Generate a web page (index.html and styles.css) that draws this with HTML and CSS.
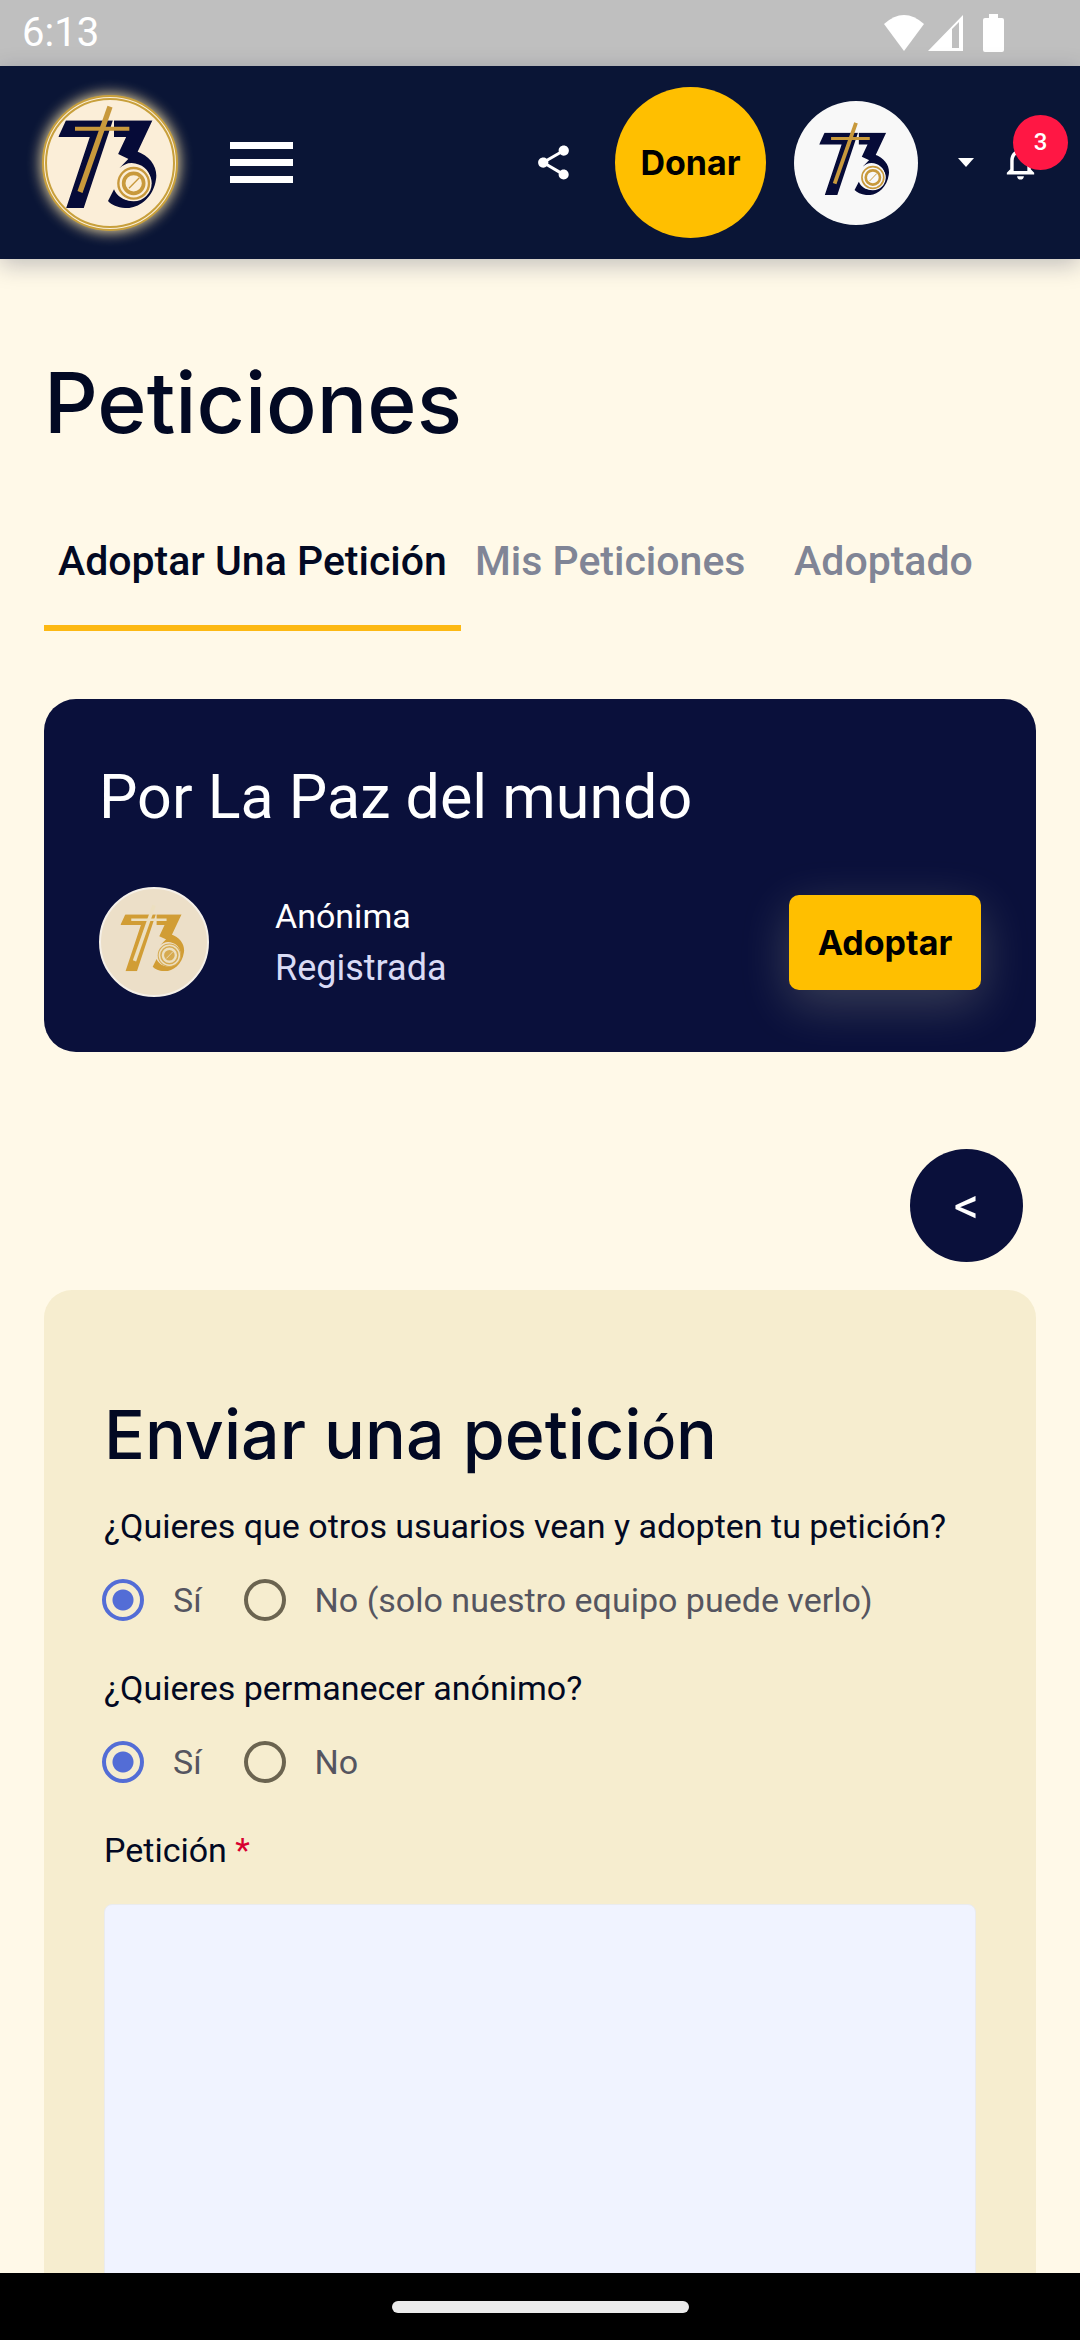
FILE: index.html
```html
<!DOCTYPE html>
<html lang="es">

<head>
    <meta charset="UTF-8">
    <meta name="viewport" content="width=device-width, initial-scale=1.0">
    <title>Peticiones</title>
    <link rel="stylesheet" href="styles.css">
</head>

<body>

    <!-- shared 73 emblem -->
    <svg class="sprite" aria-hidden="true">
        <clipPath id="emblemEdge">
            <path d="M108 178H400V441H85V228Z" />
        </clipPath>
        <symbol id="emblem" viewBox="0 66 480 480">
            <g class="emblem-main" clip-path="url(#emblemEdge)">
                <path class="emblem-stroke" d="M70 203H214L122 480" />
                <path class="emblem-stroke" d="M252 203H328L287 290" />
                <path d="M318 270C362 285 384 320 378 355C370 415 320 445 285 441C262 439 245 432 234 420L252 385C262 410 290 424 318 418C350 410 366 385 363 357C358 325 335 308 305 306C290 306 280 312 268 322Z" />
            </g>
            <g class="emblem-accent">
                <path stroke-width="16" d="M240 137L150 393" />
                <path stroke-width="12" d="M135 203H298" />
                <circle class="emblem-disc" cx="311" cy="367" r="54" />
                <circle stroke-width="7" cx="311" cy="367" r="46" />
                <circle stroke-width="11" cx="311" cy="367" r="30" />
                <path stroke-width="4" d="M297 382L328 350" />
            </g>
        </symbol>
    </svg>

    <div class="status-bar">
        <span>6:13</span>
        <div class="status-icons">
            <svg width="40" height="36" viewBox="0 0 40 36"><path d="M0 9Q20-9 40 9L20 36Z" /></svg>
            <svg width="35" height="36" viewBox="0 0 35 36"><path fill-rule="evenodd" d="M0 36L35 0V36ZM24 14V33H31V7Z" /></svg>
            <svg class="battery" width="21" height="38" viewBox="0 0 21 38"><path d="M6 0h9v4h4q2 0 2 2v30q0 2-2 2H2q-2 0-2-2V6q0-2 2-2h4z" /></svg>
        </div>
    </div>

    <header>
        <a class="logo" href="#" aria-label="Inicio">
            <svg class="emblem" width="160" height="160"><use href="#emblem" /></svg>
        </a>
        <button class="menu-button" aria-label="Menú">
            <span></span>
            <span></span>
            <span></span>
        </button>
        <div class="header-actions">
            <button class="icon-button" aria-label="Compartir">
                <svg width="41" height="41" viewBox="0 0 24 24"><path d="M18 16.1c-.8 0-1.4.3-2 .8l-7.100-4.200c.1-.2.1-.5.1-.7s0-.5-.1-.7L16 7.200c.5.500 1.200.8 2 .8 1.700 0 3-1.300 3-3s-1.300-3-3-3-3 1.300-3 3c0 .2 0 .5.1.7L8 9.800C7.500 9.300 6.800 9 6 9c-1.700 0-3 1.300-3 3s1.300 3 3 3c.8 0 1.500-.3 2-.8l7.100 4.200c-.1.200-.1.400-.1.600 0 1.600 1.300 2.900 3 2.900s2.900-1.300 2.900-2.900-1.300-2.900-2.900-2.900z" /></svg>
            </button>
            <button class="donate">Donar</button>
            <button class="profile" aria-label="Perfil">
                <svg class="emblem" width="114" height="114"><use href="#emblem" /></svg>
            </button>
            <button class="icon-button caret" aria-label="Abrir menú de perfil">
                <svg width="16" height="9" viewBox="0 0 16 9"><path d="M0 0h16L8 9z" /></svg>
            </button>
            <button class="icon-button bell" aria-label="Notificaciones">
                <svg width="41" height="41" viewBox="0 0 24 24"><path d="M12 22c1.100 0 2-.9 2-2h-4c0 1.100.9 2 2 2zm6-6v-5c0-3.100-1.600-5.600-4.500-6.300V4c0-.8-.7-1.500-1.500-1.500s-1.500.7-1.500 1.500v.7C7.600 5.400 6 7.900 6 11v5l-2 2v1h16v-1l-2-2zm-2 1H8v-6c0-2.500 1.500-4.500 4-4.500s4 2 4 4.500v6z" /></svg>
                <span class="badge">3</span>
            </button>
        </div>
    </header>

    <main>
        <h1>Peticiones</h1>

        <div class="tabs" role="tablist">
            <button class="tab active" role="tab" aria-selected="true">Adoptar Una Petición</button>
            <button class="tab" role="tab" aria-selected="false">Mis Peticiones</button>
            <button class="tab" role="tab" aria-selected="false">Adoptado</button>
        </div>

        <article class="petition">
            <h2>Por La Paz del mundo</h2>
            <div class="petition-row">
                <div class="avatar">
                    <svg class="emblem gold" width="104" height="104"><use href="#emblem" /></svg>
                </div>
                <div class="author">
                    <p>Anónima</p>
                    <p class="author-status">Registrada</p>
                </div>
                <button class="adopt">Adoptar</button>
            </div>
        </article>

        <div class="pager">
            <button class="prev" aria-label="Anterior">&lt;</button>
        </div>

        <form class="petition-form">
            <h2>Enviar una petici<span class="accented">ó</span>n</h2>

            <fieldset>
                <legend>¿Quieres que otros usuarios vean y adopten tu petición?</legend>
                <div class="options">
                    <input type="radio" name="visible" id="visibleYes" checked>
                    <label for="visibleYes">Sí</label>
                    <input type="radio" name="visible" id="visibleNo">
                    <label for="visibleNo">No (solo nuestro equipo puede verlo)</label>
                </div>
            </fieldset>

            <fieldset>
                <legend>¿Quieres permanecer anónimo?</legend>
                <div class="options">
                    <input type="radio" name="anonymous" id="anonymousYes" checked>
                    <label for="anonymousYes">Sí</label>
                    <input type="radio" name="anonymous" id="anonymousNo">
                    <label for="anonymousNo">No</label>
                </div>
            </fieldset>

            <label class="field-label" for="petition">Petición <span class="required">*</span></label>
            <textarea id="petition" rows="10"></textarea>
        </form>
    </main>

    <div class="nav-bar"><span></span></div>

</body>

</html>
```

FILE: styles.css
```css
* {
    margin: 0;
    padding: 0;
    box-sizing: border-box;
}

body {
    display: flex;
    flex-direction: column;
    height: 100vh;
    overflow: hidden;
    background-color: #fff9e8;
    color: #020923;
    font-family: Roboto, sans-serif;
    font-size: 34px;
    line-height: 52px;
}

button {
    border: none;
    background: none;
    font-family: inherit;
    cursor: pointer;
}

.sprite {
    position: absolute;
    width: 0;
    height: 0;
}

.emblem {
    --main: #060b38;
    --accent: #c8993c;
    --disc: #fbeed8;
    display: block;
    flex-shrink: 0;
}

.emblem-main {
    fill: var(--main);
}

.emblem-stroke {
    fill: none;
    stroke: var(--main);
    stroke-width: 50;
}

.emblem-accent {
    fill: none;
    stroke: var(--accent);
}

.emblem-disc {
    fill: var(--disc);
    stroke: none;
}

.emblem.gold {
    --main: #d19d35;
    --accent: #ecdfc0;
    --disc: #d6aa50;
}

/* status bar */

.status-bar {
    display: flex;
    flex-shrink: 0;
    justify-content: space-between;
    align-items: center;
    height: 66px;
    padding: 0 76px 0 22px;
    background-color: #bfbfbf;
    color: white;
    font-size: 40px;
}

.status-icons {
    display: flex;
    align-items: center;
    gap: 4px;
    fill: white;
}

.battery {
    margin-left: 16px;
}

/* header */

header {
    position: relative;
    display: flex;
    flex-shrink: 0;
    align-items: center;
    height: 193px;
    padding: 0 39px 0 42px;
    background-color: #0a1536;
    box-shadow: 0 6px 22px rgba(10, 21, 54, 0.25);
}

.logo {
    display: flex;
    align-items: center;
    justify-content: center;
    width: 136px;
    height: 136px;
    border: 5px double #c8a03c;
    border-radius: 50%;
    background-color: #fbeed8;
    box-shadow: 0 0 14px 1px #f5dfa5;
}

.menu-button {
    display: flex;
    flex-direction: column;
    gap: 10px;
    width: 63px;
    margin-left: 52px;
}

.menu-button span {
    height: 7px;
    background-color: white;
}

.header-actions {
    display: flex;
    align-items: center;
    margin-left: auto;
}

.icon-button {
    display: flex;
    fill: white;
}

.donate {
    width: 151px;
    height: 151px;
    margin: 0 28px 0 41px;
    border-radius: 50%;
    background-color: #ffbf00;
    color: black;
    font-family: Inter, sans-serif;
    font-size: 34px;
    font-weight: 700;
}

.profile {
    display: flex;
    align-items: center;
    justify-content: center;
    width: 124px;
    height: 124px;
    border-radius: 50%;
    background-color: #f8f8f8;
}

.profile .emblem {
    --disc: #f8f8f8;
}

.caret {
    margin: 0 26px 0 40px;
}

.bell {
    position: relative;
}

.badge {
    position: absolute;
    top: -27px;
    right: -27px;
    width: 55px;
    height: 55px;
    border-radius: 50%;
    background-color: #ff1744;
    color: white;
    font-size: 24px;
    font-weight: 500;
    line-height: 55px;
    text-align: center;
}

/* content */

main {
    flex: 1;
    min-height: 0;
    overflow: hidden;
    padding: 96px 44px 0;
}

h1 {
    font-family: Inter, sans-serif;
    font-size: 84px;
    font-weight: 500;
    line-height: 96px;
}

.tabs {
    display: flex;
    margin-top: 46px;
}

.tab {
    min-width: 248px;
    height: 134px;
    padding: 0 14px;
    border-bottom: 6px solid transparent;
    color: #808596;
    font-size: 41px;
    font-weight: 500;
}

.tab.active {
    border-color: #fdb913;
    color: #020923;
}

.petition {
    margin-top: 68px;
    padding: 60px 55px 55px;
    border-radius: 32px;
    background-color: #0a103b;
    color: white;
}

.petition h2 {
    font-size: 61px;
    font-weight: 400;
    line-height: 76px;
}

.petition-row {
    display: flex;
    align-items: center;
    margin-top: 52px;
}

.avatar {
    display: flex;
    align-items: center;
    justify-content: center;
    width: 110px;
    height: 110px;
    border: 2px solid #f5f0e8;
    border-radius: 50%;
    background-color: #ecdfc8;
}

.author {
    margin-left: 66px;
}

.author-status {
    color: #d9dbf5;
    font-size: 36px;
}

.adopt {
    width: 192px;
    height: 95px;
    margin-left: auto;
    border-radius: 10px;
    background-color: #ffbf00;
    box-shadow: 0 14px 50px rgba(255, 255, 200, 0.2);
    color: black;
    font-family: Inter, sans-serif;
    font-size: 34px;
    font-weight: 700;
}

.pager {
    display: flex;
    justify-content: flex-end;
    padding: 97px 13px 28px;
}

.prev {
    width: 113px;
    height: 113px;
    border-radius: 50%;
    background-color: #0a103b;
    color: white;
    font-size: 50px;
    font-weight: 400;
}

.petition-form {
    padding: 104px 60px 60px;
    border-radius: 28px;
    background-color: #f6edcf;
}

.petition-form h2 {
    margin-bottom: 22px;
    font-family: Inter, sans-serif;
    font-size: 68px;
    font-weight: 500;
    line-height: 80px;
}

.accented {
    font-family: Roboto, sans-serif;
    font-size: 61px;
    font-weight: 400;
}

fieldset {
    margin-bottom: 14px;
    border: none;
}

.options {
    display: flex;
    align-items: center;
    height: 96px;
    color: #555560;
}

.options input {
    appearance: none;
    width: 42px;
    height: 42px;
    margin-left: -2px;
    border: 4px solid #6b6450;
    border-radius: 50%;
}

.options input:checked {
    border-color: #536dd6;
    background: radial-gradient(circle, #536dd6 10px, transparent 11px);
}

.options label {
    margin: 0 44px 0 29px;
}

.field-label {
    display: block;
}

.required {
    color: #d8002f;
}

textarea {
    display: block;
    width: 100%;
    height: 520px;
    margin-top: 28px;
    padding: 24px;
    border: 1px solid #eaebee;
    border-radius: 8px;
    background-color: #f0f3ff;
    font: inherit;
    resize: none;
}

/* gesture bar */

.nav-bar {
    display: flex;
    flex-shrink: 0;
    align-items: center;
    justify-content: center;
    height: 67px;
    background-color: black;
}

.nav-bar span {
    width: 297px;
    height: 12px;
    border-radius: 6px;
    background-color: #ebebeb;
}
```
